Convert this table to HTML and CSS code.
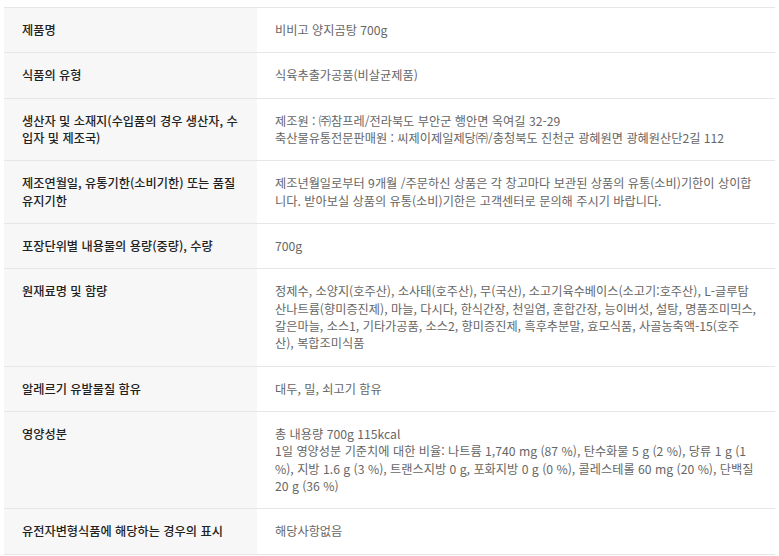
FILE: index.html
```html
<!DOCTYPE html>
<html lang="ko">
<head>
<meta charset="utf-8">
<link rel="stylesheet" href="styles.css">
</head>
<body>
<div class="wrap">
<table class="info">
<tbody>
<tr><th>제품명</th><td>비비고 양지곰탕 700g</td></tr>
<tr><th>식품의 유형</th><td>식육추출가공품(비살균제품)</td></tr>
<tr><th>생산자 및 소재지(수입품의 경우 생산자, 수입자 및 제조국)</th><td>제조원 : ㈜참프레/전라북도 부안군 행안면 옥여길 32-29<br>축산물유통전문판매원 : 씨제이제일제당㈜/충청북도 진천군 광혜원면 광혜원산단2길 112</td></tr>
<tr><th>제조연월일, 유통기한(소비기한) 또는 품질 유지기한</th><td>제조년월일로부터 9개월 /주문하신 상품은 각 창고마다 보관된 상품의 유통(소비)기한이 상이합니다. 받아보실 상품의 유통(소비)기한은 고객센터로 문의해 주시기 바랍니다.</td></tr>
<tr><th>포장단위별 내용물의 용량(중량), 수량</th><td>700g</td></tr>
<tr><th>원재료명 및 함량</th><td>정제수, 소양지(호주산), 소사태(호주산), 무(국산), 소고기육수베이스(소고기:호주산), L-글루탐산나트륨(향미증진제), 마늘, 다시다, 한식간장, 천일염, 혼합간장, 능이버섯, 설탕, 명품조미믹스, 갈은마늘, 소스1, 기타가공품, 소스2, 향미증진제, 흑후추분말, 효모식품, 사골농축액-15(호주산), 복합조미식품</td></tr>
<tr><th>알레르기 유발물질 함유</th><td>대두, 밀, 쇠고기 함유</td></tr>
<tr><th>영양성분</th><td>총 내용량 700g 115kcal<br>1일 영양성분 기준치에 대한 비율: 나트륨 1,740 mg (87 %), 탄수화물 5 g (2 %), 당류 1 g (1 %), 지방 1.6 g (3 %), 트랜스지방 0 g, 포화지방 0 g (0 %), 콜레스테롤 60 mg (20 %), 단백질 20 g (36 %)</td></tr>
<tr><th>유전자변형식품에 해당하는 경우의 표시</th><td>해당사항없음</td></tr>
</tbody>
</table>
</div>
</body>
</html>
```

FILE: styles.css
```css
html, body {
  margin: 0;
  padding: 0;
  background: #fff;
}
.wrap {
  padding: 7px 4px 0 4px;
}
.info {
  width: 100%;
  border-collapse: collapse;
  font-family: "Noto Sans CJK KR", "Noto Sans", sans-serif;
  font-size: 12.2px;
  line-height: 17.33px;
  border-top: 1px solid #e6e6e6;
}
.info tr {
  border-bottom: 1px solid #e6e6e6;
}
.info th {
  width: 217px;
  background: #f7f7f7;
  color: #222;
  font-weight: 500;
  text-align: left;
  vertical-align: top;
  padding: 14px 18px 13px 18px;
}
.info td {
  color: #666;
  vertical-align: top;
  padding: 14px 18px 13px 18px;
}
```
